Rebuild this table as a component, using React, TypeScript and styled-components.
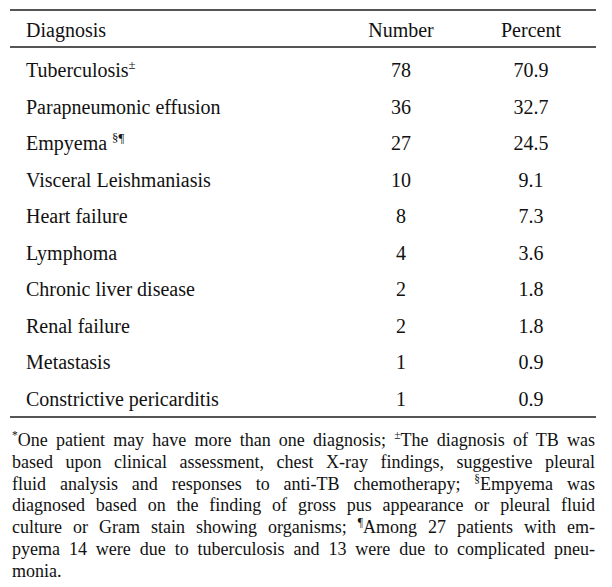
import React from "react";
import styled, { createGlobalStyle } from "styled-components";

const GlobalStyle = createGlobalStyle`
  html, body {
    margin: 0;
    padding: 0;
    background: #ffffff;
  }
`;

const Page = styled.div`
  width: 612px;
  padding: 9px 0 0 10px;
  box-sizing: border-box;
  font-family: "Liberation Serif", "Times New Roman", serif;
  color: #111111;
`;

const Table = styled.div`
  width: 586px;
  border-top: 2px solid #555;
  border-bottom: 2px solid #555;
  font-size: 20px;
`;

const Body = styled.div`
  padding-top: 3px;
`;

const Row = styled.div<{ $header?: boolean }>`
  display: grid;
  grid-template-columns: 326px 130px 130px;
  line-height: ${(p) => (p.$header ? "33px" : "32px")};
  height: ${(p) => (p.$header ? "37px" : "36.5px")};
  padding-top: 3px;
  box-sizing: border-box;
  border-bottom: ${(p) => (p.$header ? "2px solid #555" : "none")};
`;

const NameCell = styled.div`
  padding-left: 16px;
  white-space: nowrap;
`;

const NumCell = styled.div`
  text-align: center;
  white-space: nowrap;
`;

const Sup = styled.sup`
  font-size: 0.64em;
  line-height: 0;
  vertical-align: 0.62em;
`;

const Footnote = styled.div`
  width: 583px;
  margin: 12px 0 0 2px;
  font-size: 18px;
  line-height: 21.8px;
`;

const Line = styled.div<{ $last?: boolean }>`
  white-space: nowrap;
  text-align: justify;
  text-align-last: ${(p) => (p.$last ? "left" : "justify")};
`;

type Diag = { name: React.ReactNode; n: number; pct: string };

const rows: Diag[] = [
  { name: <>Tuberculosis<Sup>±</Sup></>, n: 78, pct: "70.9" },
  { name: "Parapneumonic effusion", n: 36, pct: "32.7" },
  { name: <>Empyema <Sup>§¶</Sup></>, n: 27, pct: "24.5" },
  { name: "Visceral Leishmaniasis", n: 10, pct: "9.1" },
  { name: "Heart failure", n: 8, pct: "7.3" },
  { name: "Lymphoma", n: 4, pct: "3.6" },
  { name: "Chronic liver disease", n: 2, pct: "1.8" },
  { name: "Renal failure", n: 2, pct: "1.8" },
  { name: "Metastasis", n: 1, pct: "0.9" },
  { name: "Constrictive pericarditis", n: 1, pct: "0.9" },
];

const noteLines: React.ReactNode[] = [
  <><Sup>*</Sup>One patient may have more than one diagnosis; <Sup>±</Sup>The diagnosis of TB was</>,
  <>based upon clinical assessment, chest X-ray findings, suggestive pleural</>,
  <>fluid analysis and responses to anti-TB chemotherapy; <Sup>§</Sup>Empyema was</>,
  <>diagnosed based on the finding of gross pus appearance or pleural fluid</>,
  <>culture or Gram stain showing organisms; <Sup>¶</Sup>Among 27 patients with em-</>,
  <>pyema 14 were due to tuberculosis and 13 were due to complicated pneu-</>,
  <>monia.</>,
];

export default function App() {
  return (
    <>
      <GlobalStyle />
      <Page>
        <Table>
          <Row $header>
            <NameCell>Diagnosis</NameCell>
            <NumCell>Number</NumCell>
            <NumCell>Percent</NumCell>
          </Row>
          <Body>
            {rows.map((r, i) => (
              <Row key={i}>
                <NameCell>{r.name}</NameCell>
                <NumCell>{r.n}</NumCell>
                <NumCell>{r.pct}</NumCell>
              </Row>
            ))}
          </Body>
        </Table>
        <Footnote>
          {noteLines.map((l, i) => (
            <Line key={i} $last={i === noteLines.length - 1}>
              {l}
            </Line>
          ))}
        </Footnote>
      </Page>
    </>
  );
}
